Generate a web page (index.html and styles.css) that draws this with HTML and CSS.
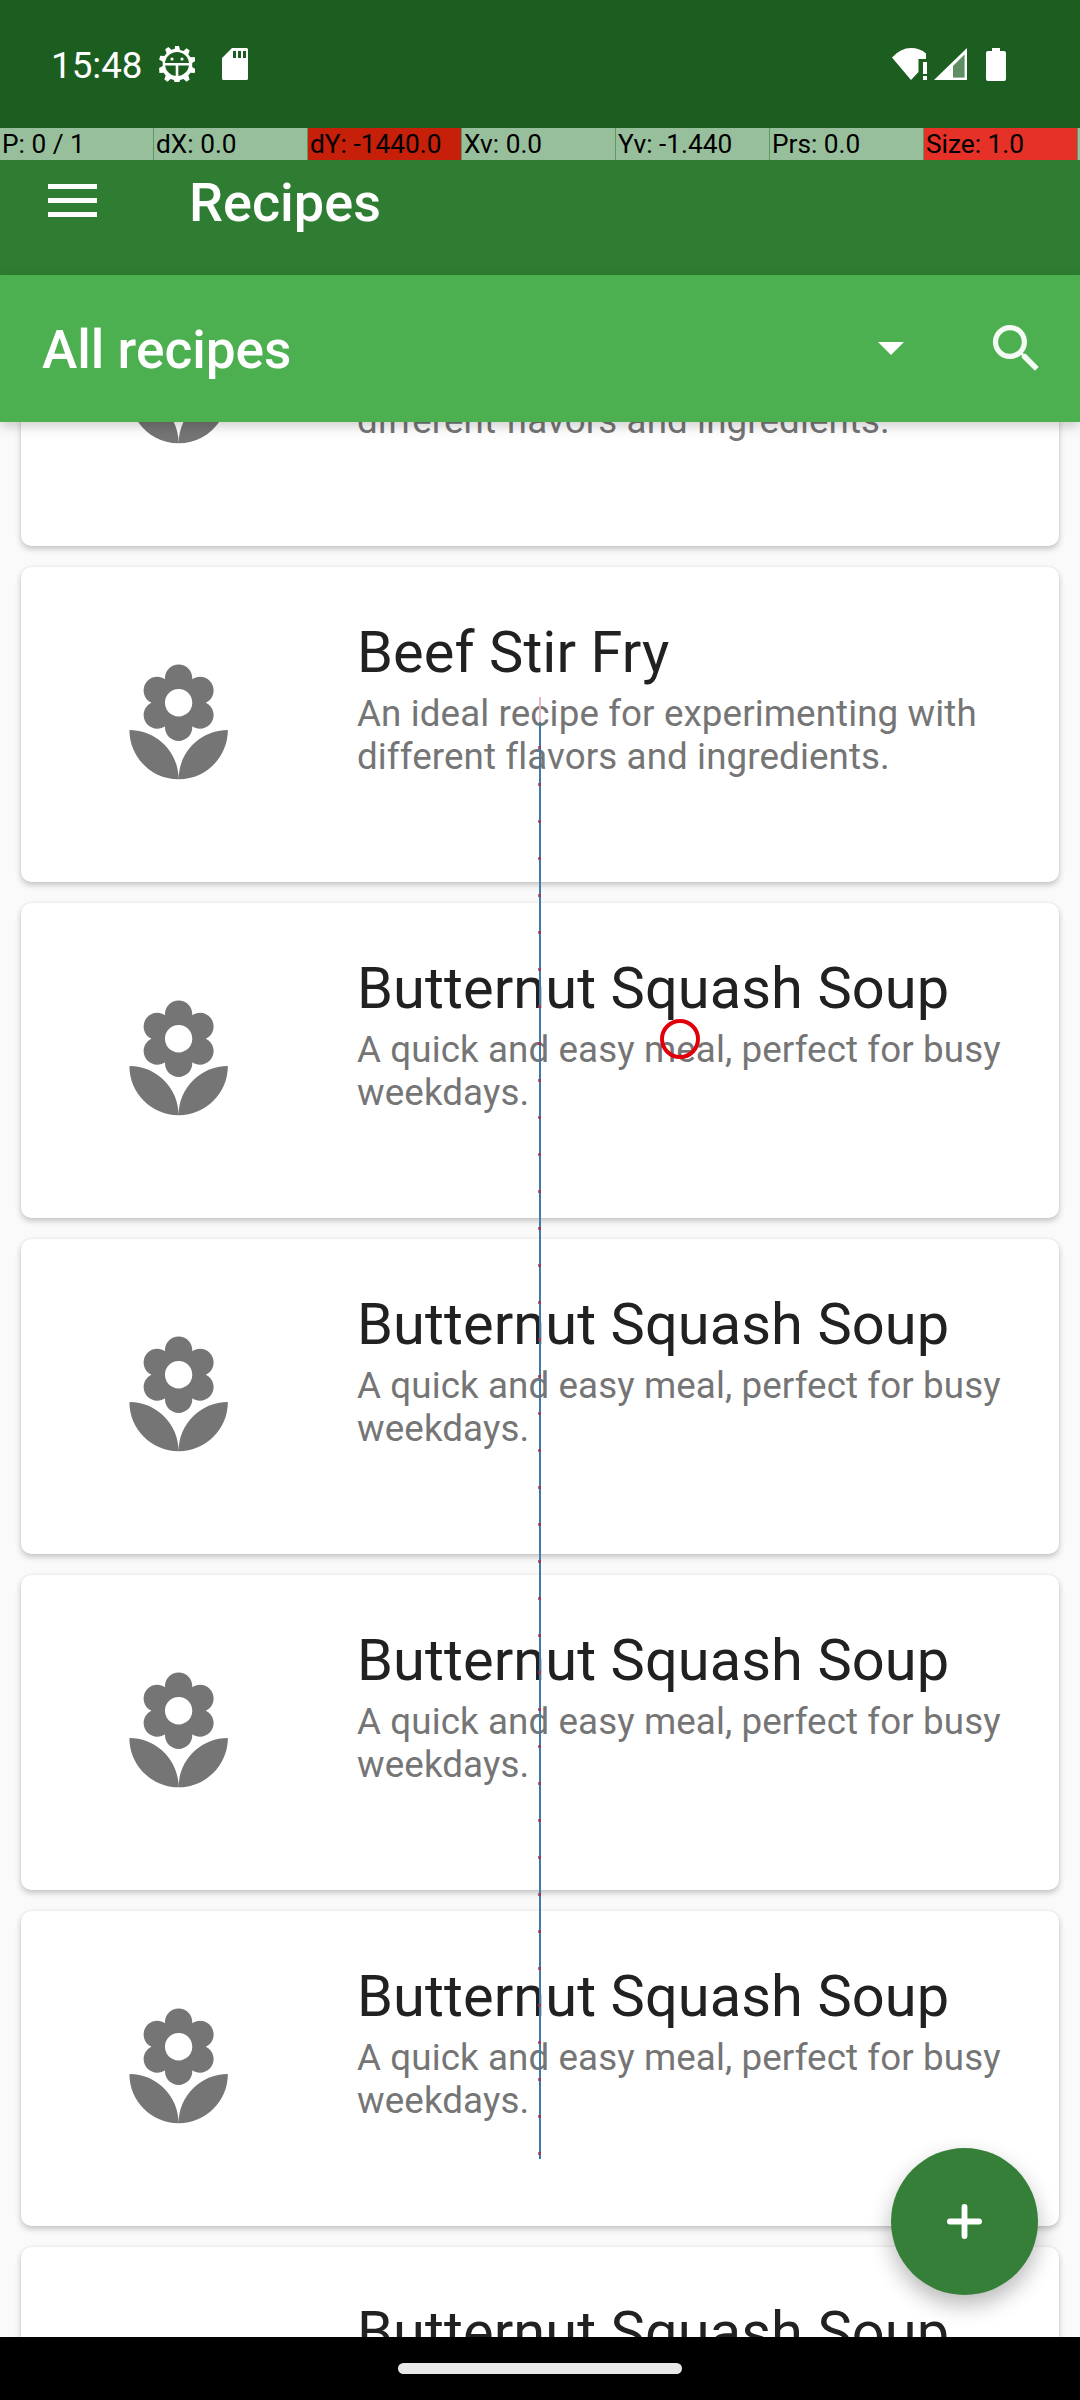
FILE: index.html
```html
<!DOCTYPE html>
<html lang="en">
<head>
    <meta charset="UTF-8">
    <meta name="viewport" content="width=device-width, initial-scale=1.0">
    <title>Recipes</title>
    <link rel="stylesheet" href="styles.css">
</head>
<body>
    <div class="screen">
        <!-- Status bar -->
        <div class="status-bar">
            <span class="clock">15:48</span>
            <svg class="gear" viewBox="0 0 36 36">
                <path fill="#fff" fill-rule="evenodd" d="M16 0h4l1 4 3.500 1 3-2.800 3.200 2.300-1.400 3.900 2.200 2.900 4.100-.300 1.200 3.800-3.600 2.100v4.200l3.600 2.100-1.200 3.800-4.100-.300-2.200 2.900 1.400 3.900-3.200 2.300-3-2.800-3.500 1-1 4h-4l-1-4-3.500-1-3 2.800-3.200-2.300 1.400-3.900-2.200-2.900-4.100.300L.100 22l3.600-2.100v-4.200L.100 13.600l1.200-3.800 4.100.300 2.200-2.900-1.400-3.900 3.200-2.300 3 2.800 3.500-1zM18 6A12 12 0 1 0 18 30 12 12 0 0 0 18 6z"/>
                <path fill="#fff" d="M6 17H30V19.500H19.300V30H16.700V19.500H6z"/>
                <circle fill="#fff" cx="13" cy="13" r="1.600"/>
                <circle fill="#fff" cx="23" cy="13" r="1.600"/>
            </svg>
            <svg class="sd-card" viewBox="0 0 26 32">
                <path fill="#fff" fill-rule="evenodd" d="M10 0H24.500Q26 0 26 1.500V30.500Q26 32 24.500 32H1.500Q0 32 0 30.500V10zM11 3v7h3V3zm5 0v7h3V3zm5 0v7h3V3z"/>
            </svg>
            <span class="status-space"></span>
            <svg class="wifi" viewBox="0 0 38 32">
                <path fill="#fff" d="M0 9.500Q8.500 0 19 0 28 0 34 5.500V11H26.500V24L19 32z"/>
                <path fill="#fff" d="M31 14H35V26H31zM31 28H35V32H31z"/>
            </svg>
            <svg class="signal" viewBox="0 0 33 32">
                <path fill="#fff" fill-rule="evenodd" d="M33 0V32H0zM30.500 6.500 19 18V29.500H30.500z"/>
                <path fill="#fff" fill-opacity=".3" d="M30.500 6.500 19 18V29.500H30.500z"/>
            </svg>
            <svg class="battery" viewBox="0 0 20 33">
                <path fill="#fff" d="M6 0H14V3H18Q20 3 20 5V31Q20 33 18 33H2Q0 33 0 31V5Q0 3 2 3H6z"/>
            </svg>
        </div>

        <!-- Toolbar -->
        <div class="toolbar">
            <div class="menu-icon">
                <span></span>
                <span></span>
                <span></span>
            </div>
            <div class="toolbar-title">Recipes</div>
        </div>

        <!-- Filter bar -->
        <div class="filter-bar">
            <div class="filter-label">All recipes</div>
            <div class="dropdown-arrow"></div>
            <svg class="search-icon" viewBox="0 0 24 24">
                <path fill="currentColor" d="M15.500 14h-.79l-.28-.27C15.410 12.590 16 11.110 16 9.500 16 5.910 13.090 3 9.500 3S3 5.910 3 9.500 5.910 16 9.500 16c1.610 0 3.090-.59 4.230-1.570l.27.28v.79l5 4.990L20.490 19l-4.990-5zm-6 0C7.010 14 5 11.990 5 9.500S7.010 5 9.500 5 14 7.010 14 9.500 11.990 14 9.500 14z"/>
            </svg>
        </div>

        <!-- Recipe list -->
        <div class="recipe-list">
            <div class="recipe-cards" id="cards"></div>
        </div>

        <!-- Navigation bar -->
        <div class="nav-bar">
            <div class="nav-pill"></div>
        </div>

        <!-- Pointer location overlay -->
        <div class="pointer-bar">
            <div class="pointer-cell">P: 0 / 1</div>
            <div class="pointer-cell">dX: 0.0</div>
            <div class="pointer-cell cell-dark-red">dY: -1440.0</div>
            <div class="pointer-cell">Xv: 0.0</div>
            <div class="pointer-cell">Yv: -1.440</div>
            <div class="pointer-cell">Prs: 0.0</div>
            <div class="pointer-cell cell-red">Size: 1.0</div>
        </div>
        <div class="trace-line"></div>
        <div class="trace-circle"></div>

        <button class="fab" type="button">
            <svg viewBox="0 0 36 36">
                <path fill="#fff" d="M15 3Q15 0 18 0T21 3V15H33Q36 15 36 18T33 21H21V33Q21 36 18 36T15 33V21H3Q0 21 0 18T3 15H15z"/>
            </svg>
        </button>
    </div>

    <script>
        const recipes = [
            { title: "Beef Stir Fry", text: "An ideal recipe for experimenting with different flavors and ingredients." },
            { title: "Beef Stir Fry", text: "An ideal recipe for experimenting with different flavors and ingredients." },
            { title: "Butternut Squash Soup", text: "A quick and easy meal, perfect for busy weekdays." },
            { title: "Butternut Squash Soup", text: "A quick and easy meal, perfect for busy weekdays." },
            { title: "Butternut Squash Soup", text: "A quick and easy meal, perfect for busy weekdays." },
            { title: "Butternut Squash Soup", text: "A quick and easy meal, perfect for busy weekdays." },
            { title: "Butternut Squash Soup", text: "A quick and easy meal, perfect for busy weekdays." }
        ];

        const flower = "M12 22c4.970 0 9-4.030 9-9-4.970 0-9 4.030-9 9zM5.600 10.250c0 1.380 1.120 2.500 2.500 2.500.53 0 1.010-.16 1.420-.44l-.02.19c0 1.380 1.120 2.500 2.500 2.500s2.500-1.120 2.500-2.500l-.02-.19c.4.28.89.44 1.420.44 1.380 0 2.500-1.120 2.500-2.500 0-1-.59-1.850-1.430-2.250.84-.4 1.430-1.250 1.430-2.250 0-1.380-1.120-2.500-2.500-2.500-.53 0-1.010.16-1.420.44l.02-.19C14.500 2.120 13.380 1 12 1S9.500 2.120 9.500 3.500l.02.19c-.4-.28-.89-.44-1.420-.44-1.380 0-2.500 1.120-2.500 2.500 0 1 .59 1.850 1.430 2.250-.84.4-1.430 1.250-1.430 2.250zM12 5.500c1.380 0 2.500 1.120 2.500 2.500s-1.120 2.500-2.500 2.500S9.500 9.380 9.500 8s1.120-2.500 2.500-2.500zM3 13c0 4.970 4.030 9 9 9 0-4.970-4.030-9-9-9z";

        document.getElementById("cards").innerHTML = recipes.map(r => `
            <div class="recipe-card">
                <svg class="recipe-icon" viewBox="0 0 24 24"><path fill="#757575" d="${flower}"/></svg>
                <div class="recipe-text">
                    <div class="recipe-title">${r.title}</div>
                    <div class="recipe-desc">${r.text}</div>
                </div>
            </div>
        `).join('');
    </script>
</body>
</html>
```

FILE: styles.css
```css
html, body {
    margin: 0;
    padding: 0;
}
body {
    font-family: Roboto, sans-serif;
    background: #fafafa;
}
.screen {
    position: relative;
    width: 1080px;
    height: 2400px;
    display: flex;
    flex-direction: column;
    overflow: hidden;
}

/* status bar */
.status-bar {
    height: 128px;
    flex: none;
    box-sizing: border-box;
    padding-left: 51px;
    padding-right: 74px;
    background: #1b5e20;
    display: flex;
    align-items: center;
}
.clock {
    font-size: 36.750px;
    color: #fff;
    width: 108px;
    margin-top: 2px;
}
.gear {
    width: 36px;
    height: 36px;
    margin-right: 27px;
}
.sd-card {
    width: 26px;
    height: 32px;
}
.status-space {
    flex: 1;
}
.wifi {
    width: 38px;
    height: 32px;
    margin-right: 4px;
}
.signal {
    width: 33px;
    height: 32px;
    margin-right: 19px;
}
.battery {
    width: 20px;
    height: 33px;
}

/* toolbar */
.toolbar {
    height: 147px;
    flex: none;
    background: #2e7d32;
    display: flex;
    align-items: center;
    position: relative;
    z-index: 2;
}
.menu-icon {
    width: 49px;
    margin-left: 48px;
    margin-right: 92px;
    margin-bottom: 2px;
    display: flex;
    flex-direction: column;
    gap: 9px;
}
.menu-icon span {
    height: 5px;
    background: #fff;
}
.toolbar-title {
    font-size: 54px;
    font-weight: 500;
    color: #fff;
    margin-top: 2px;
}

/* filter bar */
.filter-bar {
    height: 147px;
    flex: none;
    background: #4caf50;
    display: flex;
    align-items: center;
    color: #fff;
    position: relative;
    z-index: 2;
    box-shadow: 0 4px 12px rgba(0, 0, 0, 0.2);
}
.filter-label {
    flex: 1;
    padding-left: 42px;
    padding-top: 2px;
    font-size: 53.200px;
    font-weight: 500;
}
.dropdown-arrow {
    width: 0;
    height: 0;
    border-left: 13px solid transparent;
    border-right: 13px solid transparent;
    border-top: 13px solid #fff;
    margin-right: 81px;
}
.search-icon {
    width: 63px;
    height: 63px;
    margin-right: 32px;
    color: #f4faf4;
}

/* recipe list */
.recipe-list {
    flex: 1;
    overflow: hidden;
}
.recipe-cards {
    margin-top: -191px;
    padding: 0 21px;
    display: flex;
    flex-direction: column;
    gap: 21px;
}
.recipe-card {
    height: 315px;
    flex: none;
    background: #fff;
    border-radius: 10.500px;
    box-shadow: 0 3px 6px rgba(0, 0, 0, 0.22), 0 0 2px rgba(0, 0, 0, 0.08);
    display: flex;
}
.recipe-icon {
    width: 131.250px;
    height: 131.250px;
    margin: 92px 0 0 92px;
    flex: none;
}
.recipe-text {
    margin-left: 112.750px;
    padding-top: 51px;
    padding-right: 42px;
}
.recipe-title {
    font-size: 57.750px;
    letter-spacing: 0.08px;
    color: #212121;
}
.recipe-desc {
    font-size: 36.750px;
    letter-spacing: 0.1px;
    line-height: 43px;
    color: #757575;
    margin-top: 6px;
}

/* navigation bar */
.nav-bar {
    height: 63px;
    flex: none;
    background: #000;
    display: flex;
    justify-content: center;
    align-items: center;
    position: relative;
    z-index: 2;
}
.nav-pill {
    width: 284px;
    height: 11px;
    border-radius: 6px;
    background: #e8e8e8;
}

/* pointer location overlay */
.pointer-bar {
    position: absolute;
    top: 128px;
    left: 0;
    width: 1080px;
    height: 32px;
    z-index: 3;
    display: flex;
    background: #98bf9b;
}
.pointer-cell {
    width: 154px;
    box-sizing: border-box;
    border-right: 1px solid #5c9a60;
    background: #98bf9b;
    font-size: 26.250px;
    line-height: 32px;
    padding-left: 2px;
    color: #000;
    white-space: nowrap;
    overflow: hidden;
}
.cell-dark-red {
    background: #c61f0a;
}
.cell-red {
    background: #e53128;
}
.trace-line {
    position: absolute;
    left: 539px;
    top: 697px;
    width: 2px;
    height: 1462px;
    background: linear-gradient(#eab4c2 0 25px, #3f7aa8 25px);
    z-index: 1;
}
.trace-line::after {
    content: "";
    position: absolute;
    left: -1px;
    top: 49px;
    width: 3px;
    bottom: 0;
    background: repeating-linear-gradient(rgba(170, 40, 70, 0.7) 0 3px, transparent 3px 37px);
}
.trace-circle {
    position: absolute;
    left: 660px;
    top: 1019px;
    width: 32px;
    height: 32px;
    border: 4px solid #e0000a;
    border-radius: 50%;
    z-index: 1;
}

/* add button */
.fab {
    position: absolute;
    left: 891px;
    top: 2148px;
    width: 147px;
    height: 147px;
    padding: 0;
    border: none;
    border-radius: 50%;
    background: #357f38;
    box-shadow: 0 10px 22px rgba(0, 0, 0, 0.28);
    display: flex;
    align-items: center;
    justify-content: center;
    z-index: 1;
}
.fab svg {
    width: 35px;
    height: 35px;
}
```
